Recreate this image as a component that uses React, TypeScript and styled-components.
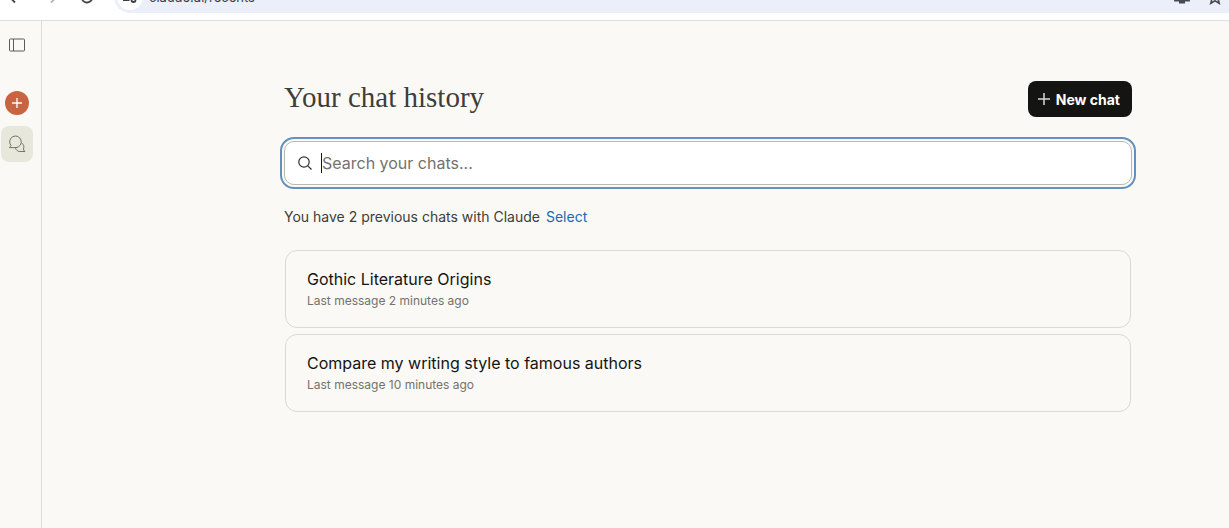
import React, { useState } from 'react';
import styled, { createGlobalStyle } from 'styled-components';

interface Chat {
  id: number;
  title: string;
  lastMessage: string;
}

const chats: Chat[] = [
  { id: 1, title: 'Gothic Literature Origins', lastMessage: '2 minutes ago' },
  { id: 2, title: 'Compare my writing style to famous authors', lastMessage: '10 minutes ago' },
];

const App: React.FC = () => {
  const [query, setQuery] = useState('');

  return (
    <>
      <GlobalStyle />
      <BrowserBar>
        <NavIcons>
          <NavButton type="button" aria-label="Back">
            <svg width="16" height="16" viewBox="0 0 16 16" fill="none" stroke="#444746" strokeWidth="1.8">
              <path d="M14 8H3M8 2.5 2.5 8 8 13.5" />
            </svg>
          </NavButton>
          <NavButton type="button" aria-label="Forward">
            <svg width="16" height="16" viewBox="0 0 16 16" fill="none" stroke="#b4b6b8" strokeWidth="1.8">
              <path d="M2 8h11M8 2.5 13.5 8 8 13.5" />
            </svg>
          </NavButton>
          <NavButton type="button" aria-label="Reload">
            <svg width="16" height="16" viewBox="0 0 16 16" fill="none" stroke="#444746" strokeWidth="1.8">
              <path d="M13.5 8A5.5 5.5 0 1 1 11.6 3.8L13.5 6M13.5 2v4h-4" />
            </svg>
          </NavButton>
        </NavIcons>
        <AddressBar>
          <SiteChip>
            <svg width="16" height="16" viewBox="0 0 16 16" fill="none" stroke="#3c4043" strokeWidth="1.8">
              <circle cx="4.5" cy="4" r="2" />
              <path d="M8.5 4H15M1 11h6.5" />
              <circle cx="11.5" cy="11" r="2" />
            </svg>
          </SiteChip>
          <Url>claude.ai/recents</Url>
          <AddressIcons>
            <svg width="18" height="16" viewBox="0 0 18 16">
              <path d="M2 2h14v9.5H2z" fill="none" stroke="#474a50" strokeWidth="1.8" />
              <path d="M6 12h6v2.5H6z" fill="#474a50" />
            </svg>
            <svg width="16" height="16" viewBox="0 0 16 16" fill="none" stroke="#474a50" strokeWidth="1.6">
              <path d="M8 1.5 9.9 6l4.8.4-3.7 3.1 1.2 4.8L8 11.8l-4.2 2.5L5 9.5 1.3 6.4 6.1 6z" />
            </svg>
          </AddressIcons>
        </AddressBar>
      </BrowserBar>

      <Layout>
        <Sidebar>
          <SidebarButton type="button" aria-label="Open sidebar">
            <svg width="18" height="14" viewBox="0 0 18 14" fill="none" stroke="#5c5b55">
              <rect x="1.5" y="1" width="15" height="12" rx="0.8" />
              <path d="M5.5 1v12" />
            </svg>
          </SidebarButton>
          <NewChatCircle type="button" aria-label="New chat">
            <svg width="12" height="12" viewBox="0 0 12 12" fill="none" stroke="#fff" strokeWidth="1.3">
              <path d="M6 1v10M1 6h10" />
            </svg>
          </NewChatCircle>
          <SidebarButton type="button" aria-label="Chats" $active>
            <svg width="18" height="18" viewBox="0 0 18 18" fill="none" stroke="#73726a" strokeLinejoin="round">
              <path d="M1.3 12.6c1-.5 1.5-1.4 1.6-2.2A5.8 5.8 0 1 1 8 12.6z" />
              <path d="M13.9 8.2c2 1.400 2.500 3.600 1.500 5.700.2.900.7 1.800 1.500 2.600h-5c-2.200 0-3.900-1.400-4.400-3.500" />
            </svg>
          </SidebarButton>
        </Sidebar>

        <Main>
          <Header>
            <Title>Your chat history</Title>
            <NewChatButton type="button">
              <svg width="12" height="12" viewBox="0 0 12 12" fill="none" stroke="#d8d8d6" strokeWidth="1.5">
                <path d="M6 0v12M0 6h12" />
              </svg>
              New chat
            </NewChatButton>
          </Header>

          <SearchBox>
            <svg width="14" height="14" viewBox="0 0 14 14" fill="none" stroke="#30302e" strokeWidth="1.2">
              <circle cx="6" cy="6" r="5.2" />
              <path d="m9.800 9.800 3.700 3.700" />
            </svg>
            <Caret />
            <SearchInput
              type="text"
              aria-label="Search your chats"
              placeholder="Search your chats..."
              value={query}
              onChange={(e) => setQuery(e.target.value)}
            />
          </SearchBox>

          <Summary>
            You have {chats.length} previous chats with Claude
            <SelectButton type="button">Select</SelectButton>
          </Summary>

          <ChatList>
            {chats.map((chat) => (
              <li key={chat.id}>
                <ChatCard href={`#chat-${chat.id}`}>
                  <ChatTitle>{chat.title}</ChatTitle>
                  <ChatMeta>Last message {chat.lastMessage}</ChatMeta>
                </ChatCard>
              </li>
            ))}
          </ChatList>
        </Main>
      </Layout>
    </>
  );
};

// Styled Components
const GlobalStyle = createGlobalStyle`
  *, *::before, *::after {
    box-sizing: border-box;
  }

  body {
    margin: 0;
    background: #faf9f5;
    color: #141413;
    font-family: Inter, 'Noto Sans', sans-serif;
  }

  #root {
    display: flex;
    flex-direction: column;
    min-height: 100vh;
  }

  button {
    font-family: inherit;
    border: none;
    padding: 0;
    cursor: pointer;
  }

  svg {
    flex-shrink: 0;
  }
`;

const BrowserBar = styled.div`
  display: flex;
  align-items: flex-end;
  height: 21px;
  padding-bottom: 7px;
  overflow: hidden;
  background: #fff;
  border-bottom: 1px solid #dcdfdc;
`;

const NavIcons = styled.div`
  display: flex;
  align-items: center;
  gap: 20px;
  width: 114px;
  height: 32px;
  padding-left: 7px;
`;

const NavButton = styled.button`
  display: flex;
  background: none;
`;

const AddressBar = styled.div`
  display: flex;
  flex: 1;
  align-items: center;
  gap: 6px;
  height: 32px;
  padding: 0 6px 0 3px;
  background: #ebeff9;
  border-radius: 16px 0 0 16px;
`;

const SiteChip = styled.span`
  display: flex;
  align-items: center;
  justify-content: center;
  width: 26px;
  height: 26px;
  background: #fff;
  border-radius: 50%;
`;

const Url = styled.span`
  flex: 1;
  color: #3c4043;
  font-size: 13px;
  line-height: 20px;
`;

const AddressIcons = styled.div`
  display: flex;
  gap: 16px;
`;

const Layout = styled.div`
  display: flex;
  flex: 1;
`;

const Sidebar = styled.nav`
  display: flex;
  flex-direction: column;
  align-items: center;
  width: 42px;
  padding: 6px 8px 0 0;
  border-right: 1px solid #dcdbd6;
`;

const SidebarButton = styled.button<{ $active?: boolean }>`
  display: flex;
  align-items: center;
  justify-content: center;
  width: 32px;
  height: 36px;
  background: ${({ $active }) => ($active ? '#e8e7dc' : 'transparent')};
  border-radius: 8px;
`;

const NewChatCircle = styled.button`
  display: flex;
  align-items: center;
  justify-content: center;
  width: 24px;
  height: 24px;
  margin: 28px 0 11px;
  background: #c96442;
  border-radius: 50%;
`;

const Main = styled.main`
  flex: 1;
  padding: 60px 97px 40px 242px;
`;

const Header = styled.header`
  display: flex;
  align-items: flex-start;
  justify-content: space-between;
`;

const Title = styled.h1`
  margin: 0;
  color: #3d3d3a;
  font-family: 'Liberation Serif', serif;
  font-size: 29px;
  font-weight: 400;
  line-height: 32px;
`;

const NewChatButton = styled.button`
  display: flex;
  align-items: center;
  gap: 6px;
  height: 36px;
  padding: 0 12px 0 10px;
  background: #141413;
  border-radius: 8px;
  color: #fff;
  font-size: 14px;
  font-weight: 700;
`;

const SearchBox = styled.label`
  display: flex;
  align-items: center;
  height: 44px;
  margin-top: 24px;
  padding: 0 13px;
  background: #fff;
  border: 1px solid #b9b9b4;
  border-radius: 10px;
  outline: 2px solid #6590bd;
  outline-offset: 2px;
`;

const Caret = styled.span`
  width: 1px;
  height: 20px;
  margin-left: 9px;
  background: #141413;
`;

const SearchInput = styled.input`
  flex: 1;
  min-width: 0;
  padding: 0;
  background: none;
  border: none;
  outline: none;
  color: #141413;
  font-family: inherit;
  font-size: 16px;

  &::placeholder {
    color: #73726c;
    opacity: 1;
  }
`;

const Summary = styled.p`
  display: flex;
  gap: 6px;
  margin: 22px 0 23px;
  color: #3d3d3a;
  font-size: 14px;
  line-height: 20px;
`;

const SelectButton = styled.button`
  background: none;
  color: #1b67b2;
  font-size: 14px;
  line-height: 20px;
`;

const ChatList = styled.ul`
  display: flex;
  flex-direction: column;
  gap: 6px;
  margin: 0;
  padding: 0 1px;
  list-style: none;
`;

const ChatCard = styled.a`
  display: flex;
  flex-direction: column;
  padding: 17px 21px 15px;
  border: 1px solid #dad9d4;
  border-radius: 12px;
  color: #141413;
  text-decoration: none;
`;

const ChatTitle = styled.span`
  font-size: 16px;
  line-height: 22px;
`;

const ChatMeta = styled.span`
  color: #73726c;
  font-size: 12px;
  line-height: 22px;
`;

export default App;
